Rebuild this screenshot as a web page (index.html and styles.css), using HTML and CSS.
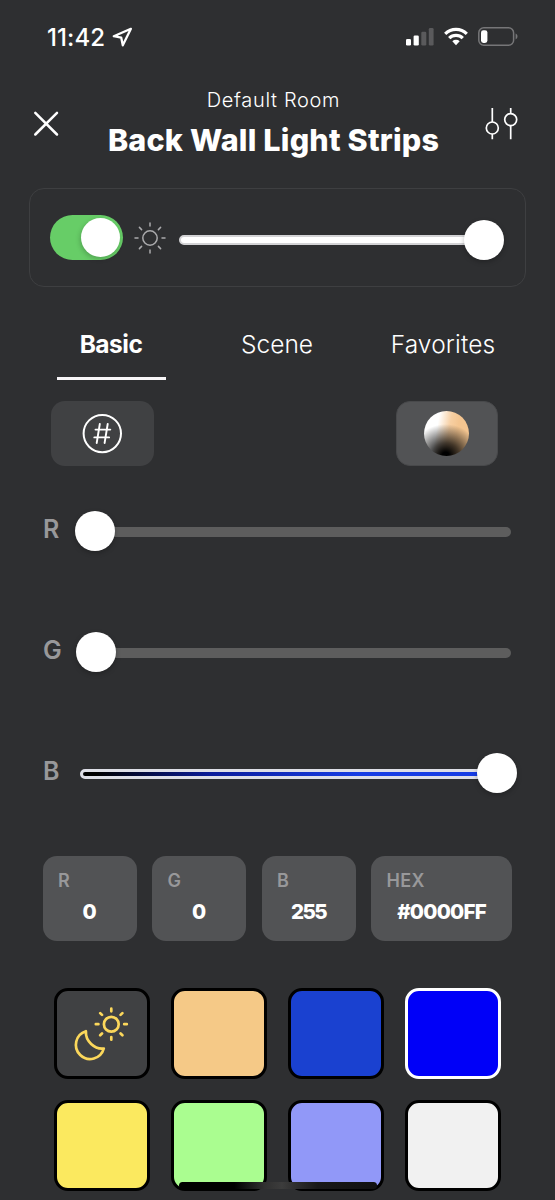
FILE: index.html
```html
<!DOCTYPE html>
<html lang="en">
<head>
<meta charset="utf-8">
<title>Back Wall Light Strips</title>
<link rel="stylesheet" href="styles.css">
</head>
<body>
<div class="screen">
  <div class="status">
    <span class="time">11:42</span>
    <svg class="loc" width="22" height="22" viewBox="0 0 22 22"><path d="M19.9 2.8 2.8 10.2 10.2 11.6 11.8 19.3Z" fill="none" stroke="#fff" stroke-width="2.3" stroke-linejoin="round"/></svg>
    <svg class="sys" width="114" height="22" viewBox="0 0 114 22">
      <g fill="#fff"><rect x="1" y="13" width="5" height="6.5" rx="1.3"/><rect x="8.6" y="9.4" width="5.2" height="10.1" rx="1.3"/></g>
      <g fill="#5a5a5c"><rect x="16.3" y="5.8" width="5" height="13.7" rx="1.3"/><rect x="23.8" y="2" width="4.8" height="17.5" rx="1.3"/></g>
      <g fill="none" stroke="#fff" stroke-width="3.2"><path d="M40.2 7.8a15.5 15.5 0 0 1 21.6 0"/><path d="M44.2 12.1a9.6 9.6 0 0 1 13.6 0"/></g>
      <path d="M47.3 15.2a5.5 5.5 0 0 1 7.4 0L51 19.2Z" fill="#fff"/>
      <rect x="73.8" y="1.7" width="34.8" height="17.5" rx="5" fill="none" stroke="#767678" stroke-width="1.5"/>
      <rect x="76" y="4.2" width="6.4" height="12.8" rx="2.4" fill="#fff"/>
      <path d="M110.6 7.6c2.5.8 2.5 5 0 5.8Z" fill="#767678"/>
    </svg>
  </div>

  <header class="header">
    <svg class="close" width="26" height="26" viewBox="0 0 26 26"><path d="M2.3 1.8 24 23.5M24 1.8 2.3 23.5" stroke="#fff" stroke-width="2.5" stroke-linecap="round"/></svg>
    <div class="titles">
      <div class="room">Default Room</div>
      <h1 class="title">Back Wall Light Strips</h1>
    </div>
    <svg class="adjust" width="34" height="34" viewBox="0 0 34 34"><g fill="none" stroke="#fff" stroke-width="1.7"><circle cx="7.3" cy="21" r="6"/><circle cx="25.7" cy="12.6" r="6"/><path d="M7.3 1v14M7.3 27v5.3M25.7 1v5.6M25.7 18.6v13.7"/></g></svg>
  </header>

  <section class="power">
    <div class="toggle"><div class="knob"></div></div>
    <svg class="sun" width="34" height="34" viewBox="-17 -17 34 34"><g fill="none" stroke="#aaaaac" stroke-width="1.5" stroke-linecap="round"><circle r="7.2"/><path d="M0-15v3M0 12v3M-15 0h3M12 0h3M-10.6-10.6l2.2 2.2M8.4 8.4l2.2 2.2M-10.6 10.6l2.2-2.2M8.4-8.4l2.2-2.2"/></g></svg>
    <div class="slider bright"><div class="track"></div><div class="thumb"></div></div>
  </section>

  <nav class="tabs">
    <div class="tab active"><span class="basic">Basic</span></div>
    <div class="tab"><span>Scene</span></div>
    <div class="tab"><span class="favorites">Favorites</span></div>
  </nav>

  <div class="modes">
    <div class="mode"><svg width="42" height="42" viewBox="-20.3 -20.6 42 42"><g fill="none" stroke="#fff" stroke-linecap="round"><circle r="18.7" stroke-width="2"/><path stroke-width="1.9" d="M-2.5-9.6-5.6 9.4M5.4-9.6 2.3 9.4M-6.8-4H8M-8 3.8H6.8"/></g></svg></div>
    <div class="mode selected"><div class="ball"></div></div>
  </div>

  <div class="channels">
    <div class="channel"><span class="name">R</span><div class="slider"><div class="track"></div><div class="thumb low-r"></div></div></div>
    <div class="channel"><span class="name">G</span><div class="slider"><div class="track"></div><div class="thumb low-g"></div></div></div>
    <div class="channel"><span class="name">B</span><div class="slider"><div class="track blue"></div><div class="thumb full"></div></div></div>
  </div>

  <div class="values">
    <div class="box"><span class="label">R</span><span class="val">0</span></div>
    <div class="box"><span class="label">G</span><span class="val">0</span></div>
    <div class="box"><span class="label">B</span><span class="val num">255</span></div>
    <div class="box"><span class="label">HEX</span><span class="val hex">#0000FF</span></div>
  </div>

  <div class="swatches">
    <div class="swatch auto"><svg width="90" height="85" viewBox="0 0 90 85"><g fill="none" stroke="#fbd75b" stroke-width="2.7" stroke-linecap="round" stroke-linejoin="round"><circle cx="54.3" cy="33.2" r="7.4"/><path d="M54.3 17.7v2.6M54.3 46.1v2.6M38.8 33.2h2.6M67.2 33.2h2.6M43.2 22.1l1.8 1.8M63.6 42.5l1.8 1.8M43.2 44.3l1.8-1.8M63.6 23.9l1.8-1.8"/><path d="M28.9 40.2A14.2 14.2 0 1 0 46.8 57.5C37.5 58.6 28.3 50.3 28.9 40.2Z"/></g></svg></div>
    <div class="swatch peach"></div>
    <div class="swatch royal"></div>
    <div class="swatch pure"></div>
    <div class="swatch yellow"></div>
    <div class="swatch green"></div>
    <div class="swatch lilac"></div>
    <div class="swatch white"></div>
  </div>
  <div class="home"></div>
</div>
</body>
</html>
```
FILE: styles.css
```css
* { box-sizing: border-box; }
body { margin: 0; background: #2e2f31; }
.screen {
  position: relative;
  display: flex;
  flex-direction: column;
  width: 555px;
  height: 1200px;
  overflow: hidden;
  background: #2e2f31;
  color: #fff;
  font-family: Inter, "Liberation Sans", sans-serif;
  white-space: nowrap;
}
.status { display: flex; height: 88px; padding: 26px 0 0 47px; }
.time { width: 60px; font-size: 24px; font-weight: 500; line-height: 23px; letter-spacing: 0.1px; }
.loc { margin-left: 4px; }
.sys { margin-left: 272px; }

.header { display: flex; height: 100px; padding: 0 36px 0 33px; }
.close { margin-top: 23px; }
.titles { flex: 1; display: flex; flex-direction: column; align-items: center; padding-left: 3px; }
.room { height: 24px; line-height: 24px; font-size: 20px; font-weight: 300; letter-spacing: 0.65px; }
.title { margin: 11px 0 0; height: 34px; line-height: 34px; font-size: 30.5px; font-weight: 800; letter-spacing: 0.2px; }
.adjust { margin-top: 19px; }

.power {
  display: flex;
  height: 99px;
  margin: 0 29px;
  padding: 26px 20px 0;
  border: 1.5px solid #3e3f41;
  border-radius: 15px;
}
.toggle { width: 73px; height: 45px; padding: 3px; border-radius: 23px; background: #67cd67; display: flex; justify-content: flex-end; }
.knob { width: 39px; height: 39px; border-radius: 50%; background: #fff; box-shadow: -1px 2px 5px rgba(0,0,0,.2); }
.sun { margin: 5.5px 0 0 9.6px; }
.slider { display: flex; align-items: center; height: 40px; }
.bright { flex: 1; margin: 5px 1px 0 12.4px; }
.track { height: 10px; flex: 1; border-radius: 5px; background: #5d5d5d; }
.bright .track { border: 2px solid #d3d3d5; background: #fff; }
.thumb { flex: none; width: 40px; height: 40px; border-radius: 50%; background: #fff; box-shadow: 0 2px 5px rgba(0,0,0,.25); }
.bright .thumb { margin-left: -21px; }

.tabs { display: grid; grid-template-columns: repeat(3, 166px); height: 93px; margin: 37px 0 0 28px; }
.tab { display: flex; flex-direction: column; align-items: center; height: 56px; font-size: 24.5px; font-weight: 300; line-height: 40px; }
.active { font-weight: 700; }
.basic { letter-spacing: -0.5px; }
.favorites { letter-spacing: 0.15px; }
.active::after { content: ""; width: 109px; height: 3px; margin-top: 12.5px; background: #f7f5f7; }

.modes { display: flex; justify-content: space-between; margin: -16px 57px 0 51px; }
.mode { display: flex; align-items: center; justify-content: center; width: 103px; height: 65px; border-radius: 14px; background: #404143; }
.selected { width: 102px; background: #525355; border: 1px solid #48494b; }
.ball {
  width: 45px; height: 45px; margin-right: 1px; border-radius: 50%;
  background:
    radial-gradient(ellipse 34px 31px at 48% 98%, #000 10%, rgba(0,0,0,.72) 40%, rgba(0,0,0,.3) 75%, rgba(0,0,0,0) 100%),
    linear-gradient(100deg, #fff 30%, #f7cfa2 54%, #f4c590 70%);
}
.channels { display: flex; flex-direction: column; gap: 81px; margin: 45px 38px 0 43px; }
.channel { display: flex; height: 40px; }
.name { width: 31px; color: #98989a; font-size: 25px; font-weight: 600; line-height: 36px; }
.channel .slider { flex: 1; }
.channel .track { margin: 1px -40px 0 6px; flex: 0 0 431px; }
.track.blue { border: 3px solid #dedfe7; background: linear-gradient(90deg, #000 0 3%, #0b1c9a 30%, #173de5 65%); }
.thumb.low-r { margin-left: -396.5px; }
.thumb.low-g { margin-left: -395px; }
.thumb.full { margin-left: 5.5px; }

.values { display: grid; grid-template-columns: 94px 94px 94px 141px; gap: 15.5px; margin: 63px 0 0 42.6px; }
.box { display: flex; flex-direction: column; height: 85px; padding: 14px 15.5px 0; border-radius: 14px; background: #525355; }
.label { color: #98989a; font-size: 18px; font-weight: 600; line-height: 22px; letter-spacing: 0.3px; }
.val { align-self: center; margin-top: 7px; font-size: 20.5px; font-weight: 800; line-height: 26px; }
.num { letter-spacing: -1.6px; }
.hex { letter-spacing: -0.75px; }

.swatches { display: grid; grid-template-columns: repeat(4, 96px); column-gap: 21.3px; row-gap: 21.5px; margin: 47px 0 0 53.5px; }
.swatch { height: 90.5px; border: 3px solid #000; border-radius: 14px; }
.auto { background: #404143; }
.peach { background: #f5c987; }
.royal { background: #1a41d0; }
.pure { background: #0000f8; border-color: #fff; }
.yellow { background: #fbe95f; }
.green { background: #aafd90; }
.lilac { background: #9198f8; }
.white { background: #f1f1f1; }
.home {
  position: absolute; left: 179px; top: 1182px; width: 198px; height: 7px; border-radius: 4px;
  background: linear-gradient(90deg, #000 0 28%, #303030 43%, #3c3c3c 52%, #181818 70%, #111);
}
```
